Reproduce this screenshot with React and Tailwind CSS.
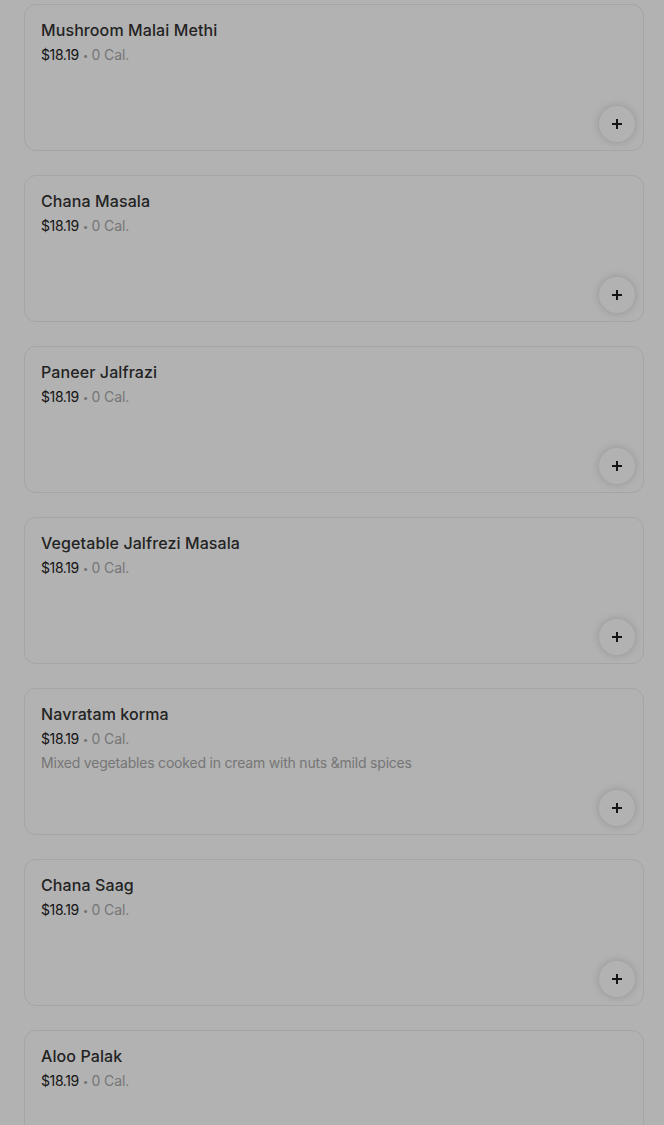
const items = [
  { name: 'Mushroom Malai Methi', price: '$18.19', cal: '0 Cal.' },
  { name: 'Chana Masala', price: '$18.19', cal: '0 Cal.' },
  { name: 'Paneer Jalfrazi', price: '$18.19', cal: '0 Cal.' },
  { name: 'Vegetable Jalfrezi Masala', price: '$18.19', cal: '0 Cal.' },
  {
    name: 'Navratam korma',
    price: '$18.19',
    cal: '0 Cal.',
    description: 'Mixed vegetables cooked in cream with nuts &mild spices',
  },
  { name: 'Chana Saag', price: '$18.19', cal: '0 Cal.' },
  { name: 'Aloo Palak', price: '$18.19', cal: '0 Cal.' },
]

function PlusIcon() {
  return (
    <svg width="12" height="12" viewBox="0 0 12 12" fill="none">
      <path d="M6 1v10M1 6h10" stroke="#1f1f1f" strokeWidth="2" />
    </svg>
  )
}

function MenuCard({ item }) {
  return (
    <div className="flex h-[147px] flex-col rounded-xl border border-[#ececec] bg-white pl-4 pr-2 pt-[13px] pb-2">
      <p className="text-[16px] font-medium leading-6 tracking-[0.1px] text-[#333]">{item.name}</p>
      <p className="mt-[3px] flex items-center text-[14px] leading-5">
        <span className="tracking-[-0.4px] text-[#222]">{item.price}</span>
        <span className="ml-1 mr-[3px] text-[10px] text-[#aaa]">•</span>
        <span className="tracking-[-0.1px] text-[#aaa]">{item.cal}</span>
      </p>
      {item.description && (
        <p className="mt-1 text-[14px] leading-5 tracking-[-0.2px] text-[#aaa]">{item.description}</p>
      )}
      <button className="mt-auto flex h-9 w-9 items-center justify-center self-end rounded-full bg-white shadow-[0_0_8px_rgba(0,0,0,0.18)]">
        <PlusIcon />
      </button>
    </div>
  )
}

export default function App() {
  return (
    <div className="min-h-screen bg-white" style={{ fontFamily: 'Inter, "Liberation Sans", sans-serif' }}>
      <div className="flex flex-col gap-6 pl-6 pr-5 pt-1 pb-6">
        {items.map((item, i) => (
          <MenuCard key={i} item={item} />
        ))}
      </div>
      {/* modal backdrop dims the page */}
      <div className="fixed inset-0 bg-black/30" />
    </div>
  )
}
